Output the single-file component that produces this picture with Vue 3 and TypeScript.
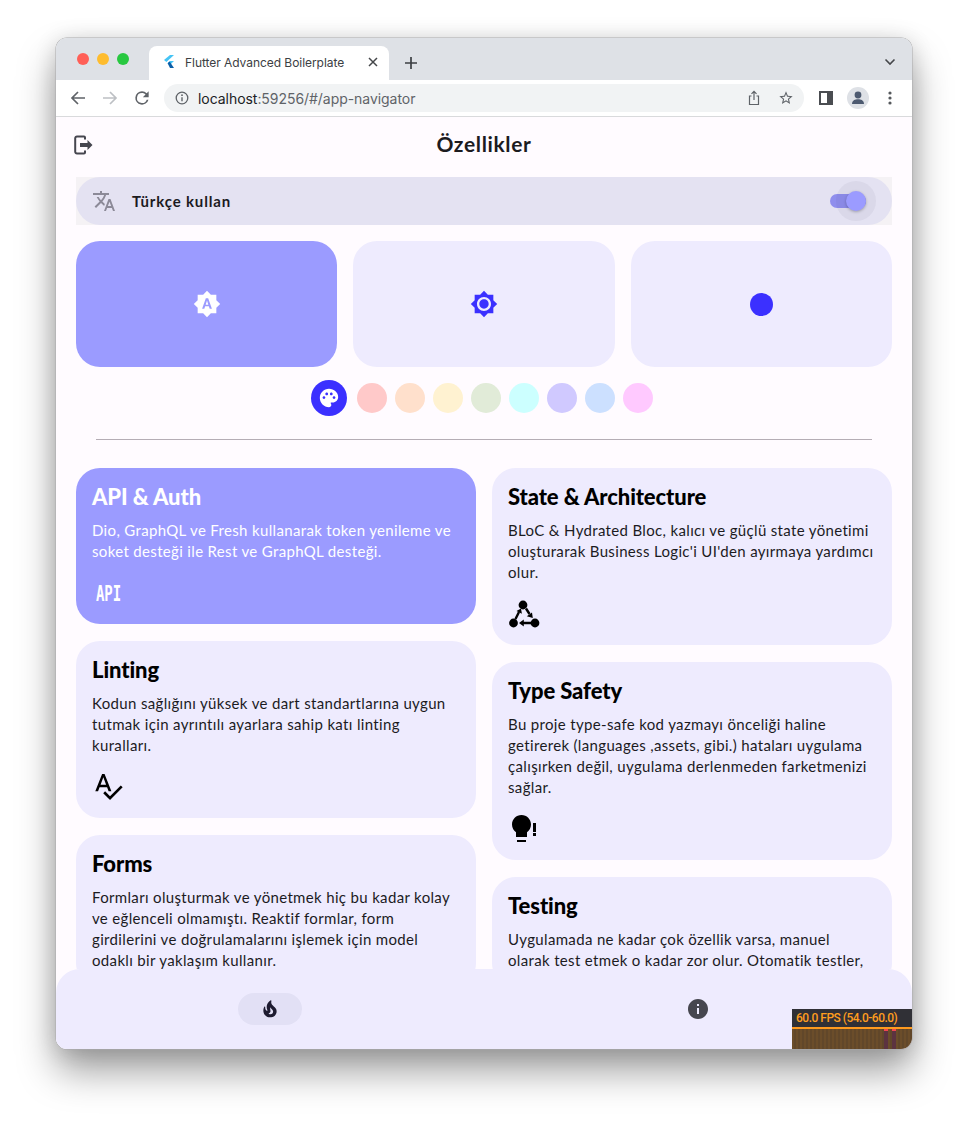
<script setup lang="ts">
interface Card { title: string; lines: string[]; icon?: string; active?: boolean }

const swatches: string[] = ['#ffc9c9', '#ffe0cc', '#fff2d1', '#e1ebd8', '#ccffff', '#d0c9ff', '#cce0ff', '#ffc9ff']

const leftCards: Card[] = [
  { title: 'API & Auth', active: true, icon: 'api', lines: ['Dio, GraphQL ve Fresh kullanarak token yenileme ve', 'soket desteği ile Rest ve GraphQL desteği.'] },
  { title: 'Linting', icon: 'lint', lines: ['Kodun sağlığını yüksek ve dart standartlarına uygun', 'tutmak için ayrıntılı ayarlara sahip katı linting', 'kuralları.'] },
  { title: 'Forms', lines: ['Formları oluşturmak ve yönetmek hiç bu kadar kolay', 've eğlenceli olmamıştı. Reaktif formlar, form', 'girdilerini ve doğrulamalarını işlemek için model', 'odaklı bir yaklaşım kullanır.'] },
]
const rightCards: Card[] = [
  { title: 'State & Architecture', icon: 'state', lines: ['BLoC & Hydrated Bloc, kalıcı ve güçlü state yönetimi', "oluşturarak Business Logic'i UI'den ayırmaya yardımcı", 'olur.'] },
  { title: 'Type Safety', icon: 'type', lines: ['Bu proje type-safe kod yazmayı önceliği haline', 'getirerek (languages ,assets, gibi.) hataları uygulama', 'çalışırken değil, uygulama derlenmeden farketmenizi', 'sağlar.'] },
  { title: 'Testing', lines: ['Uygulamada ne kadar çok özellik varsa, manuel', 'olarak test etmek o kadar zor olur. Otomatik testler,'] },
]
const columns: Card[][] = [leftCards, rightCards]
</script>

<template>
  <div class="stage">
    <div class="window">
      <div class="tabstrip">
        <div class="lights">
          <span class="light red"></span>
          <span class="light amber"></span>
          <span class="light green"></span>
        </div>
        <div class="tab">
          <svg class="favicon" width="12" height="14" viewBox="0 0 12 14">
            <polygon points="7,0 11,0 3.4,7 1,5" fill="#45c4f5" />
            <polygon points="7,6 11,6 6.6,10.2 4.6,8.2" fill="#45c4f5" />
            <polygon points="4.6,8.2 6.6,6.6 11,13 7,13" fill="#0a5fa8" />
          </svg>
          <span class="tab-title">Flutter Advanced Boilerplate</span>
          <svg class="tab-close" width="10" height="10" viewBox="0 0 10 10"><path d="M1 1l8 8M9 1l-8 8" stroke="#45474a" stroke-width="1.5" /></svg>
        </div>
        <svg class="newtab" width="14" height="14" viewBox="0 0 14 14"><path d="M7 1v12M1 7h12" stroke="#3c3f43" stroke-width="1.7" /></svg>
        <svg class="chev" width="12" height="8" viewBox="0 0 12 8"><path d="M1.5 1.5L6 6l4.5-4.5" fill="none" stroke="#45474a" stroke-width="1.6" /></svg>
      </div>

      <div class="toolbar">
        <svg class="tb-btn" width="16" height="16" viewBox="0 0 16 16"><path d="M15 8H2M8 2L2 8l6 6" fill="none" stroke="#5f6368" stroke-width="1.7" /></svg>
        <svg class="tb-btn" width="16" height="16" viewBox="0 0 16 16"><path d="M1 8h13M8 2l6 6-6 6" fill="none" stroke="#bdc0c4" stroke-width="1.7" /></svg>
        <svg class="tb-btn reload" width="20" height="20" viewBox="0 0 24 24"><path fill="#5f6368" d="M17.65 6.35A7.96 7.96 0 0 0 12 4a8 8 0 1 0 7.73 10h-2.08A6 6 0 1 1 12 6c1.66 0 3.14.69 4.22 1.78L13 11h7V4l-2.35 2.35z" /></svg>
        <div class="omnibox">
          <svg width="14" height="14" viewBox="0 0 14 14"><circle cx="7" cy="7" r="5.8" fill="none" stroke="#5f6368" stroke-width="1.3" /><path d="M7 6.2v4" stroke="#5f6368" stroke-width="1.4" /><circle cx="7" cy="4.2" r=".9" fill="#5f6368" /></svg>
          <span class="url"><b>localhost</b>:59256/#/app-navigator</span>
          <span class="omni-right">
            <svg width="14" height="16" viewBox="0 0 14 16"><path d="M4.5 6H2.500v8.500h9V6H9.500M7 10V1.500M4.500 3.800L7 1.300l2.500 2.500" fill="none" stroke="#5f6368" stroke-width="1.2" /></svg>
            <svg width="16" height="16" viewBox="0 0 24 24"><path fill="#5f6368" d="M22 9.24l-7.19-.62L12 2 9.19 8.63 2 9.24l5.46 4.73L5.82 21 12 17.27 18.18 21l-1.63-7.03L22 9.24zM12 15.4l-3.76 2.27 1-4.28-3.32-2.88 4.38-.38L12 6.1l1.71 4.04 4.38.38-3.32 2.88 1 4.28L12 15.4z" /></svg>
          </span>
        </div>
        <svg class="side" width="14" height="14" viewBox="0 0 14 14"><rect x="1" y="1" width="12" height="12" fill="#fff" stroke="#4a4d51" stroke-width="2" /><rect x="8" y="1" width="5" height="12" fill="#4a4d51" /></svg>
        <span class="avatar">
          <svg width="16" height="16" viewBox="0 0 16 16"><circle cx="8" cy="5" r="3.4" fill="#4d5a70" /><path d="M2 14c0-3.500 3-4.800 6-4.800s6 1.300 6 4.800z" fill="#4d5a70" /></svg>
        </span>
        <svg class="dots" width="4" height="14" viewBox="0 0 4 14"><circle cx="2" cy="2" r="1.6" fill="#55585c" /><circle cx="2" cy="7" r="1.6" fill="#55585c" /><circle cx="2" cy="12" r="1.6" fill="#55585c" /></svg>
      </div>

      <div class="app">
        <div class="scroll">
          <header class="appbar">
            <svg class="logout" width="20" height="20" viewBox="0 0 20 20">
              <path d="M11 4.500V2.500a1 1 0 0 0-1-1H3a1.800 1.800 0 0 0-1.800 1.800v13.400a1.800 1.800 0 0 0 1.800 1.800h7a1 1 0 0 0 1-1v-2" fill="none" stroke="#46464f" stroke-width="2" />
              <path d="M6 8h7.500V5l5 5-5 5v-3H6z" fill="#46464f" />
            </svg>
            <h1>Özellikler</h1>
          </header>

          <div class="lang-bg">
            <div class="lang">
              <svg width="24" height="24" viewBox="0 0 24 24"><path fill="#8c8a98" d="M12.87 15.07l-2.54-2.51.03-.03c1.74-1.94 2.98-4.17 3.71-6.53H17V4h-7V2H8v2H1v1.99h11.17C11.5 7.92 10.44 9.75 9 11.35 8.07 10.32 7.3 9.19 6.69 8h-2c.73 1.63 1.73 3.17 2.98 4.56l-5.09 5.02L4 19l5-5 3.11 3.11.76-2.04zM18.5 10h-2L12 22h2l1.12-3h4.75L21 22h2l-4.5-12zm-2.62 7l1.62-4.33L19.12 17h-3.24z" /></svg>
              <span class="lang-label">Türkçe kullan</span>
              <span class="switch"><span class="halo"></span><span class="thumb"></span></span>
            </div>
          </div>

          <div class="themes">
            <div class="theme selected">
              <svg width="28" height="28" viewBox="0 0 24 24"><path fill="#fff" d="M10.85 12.65h2.3L12 9l-1.15 3.65zM20 8.69V4h-4.69L12 .69 8.69 4H4v4.69L.69 12 4 15.31V20h4.69L12 23.31 15.31 20H20v-4.69L23.31 12 20 8.69zM14.3 16l-.7-2h-3.2l-.7 2H7.8L11 7h2l3.2 9h-1.9z" /></svg>
            </div>
            <div class="theme">
              <svg width="28" height="28" viewBox="0 0 24 24"><path fill="#3b30ff" d="M20 8.69V4h-4.69L12 .69 8.69 4H4v4.69L.69 12 4 15.31V20h4.69L12 23.31 15.31 20H20v-4.69L23.31 12 20 8.69zM12 18c-3.31 0-6-2.69-6-6s2.69-6 6-6 6 2.69 6 6-2.69 6-6 6zm0-10c-2.21 0-4 1.79-4 4s1.79 4 4 4 4-1.79 4-4-1.79-4-4-4z" /></svg>
            </div>
            <div class="theme"><span class="dot"></span></div>
          </div>

          <div class="colors">
            <span class="palette">
              <svg width="22" height="22" viewBox="0 0 24 24"><path fill="#fff" d="M12 2C6.49 2 2 6.49 2 12s4.49 10 10 10c1.38 0 2.5-1.12 2.5-2.5 0-.61-.23-1.2-.64-1.67-.08-.1-.13-.21-.13-.33 0-.28.22-.5.5-.5H16c3.31 0 6-2.69 6-6 0-4.96-4.49-9-10-9zm5.5 11c-.83 0-1.5-.67-1.5-1.5s.67-1.5 1.5-1.5 1.5.67 1.5 1.5-.67 1.5-1.5 1.5zm-3-4c-.83 0-1.5-.67-1.5-1.5S13.67 6 14.5 6s1.5.67 1.5 1.5S15.33 9 14.5 9zM5 11.5c0-.83.67-1.5 1.5-1.5s1.5.67 1.5 1.5S7.33 13 6.5 13 5 12.33 5 11.5zm6-4c0 .83-.67 1.5-1.5 1.5S8 8.33 8 7.5 8.67 6 9.5 6s1.5.67 1.5 1.5z" /></svg>
            </span>
            <span v-for="c in swatches" :key="c" class="swatch" :style="{ background: c }"></span>
          </div>

          <div class="divider"></div>

          <div class="grid">
            <div v-for="(col, i) in columns" :key="i" class="col">
              <section v-for="card in col" :key="card.title" class="card" :class="{ active: card.active }">
                <h2>{{ card.title }}</h2>
                <p><span v-for="l in card.lines" :key="l" class="line">{{ l }}</span></p>
                <div v-if="card.icon" class="card-icon">
                  <span v-if="card.icon === 'api'" class="api-mark">API</span>
                  <svg v-else-if="card.icon === 'lint'" width="32" height="32" viewBox="0 0 24 24"><path fill="#000" d="M12.45 16h2.09L9.43 3H7.57L2.46 16h2.09l1.12-3h5.64l1.14 3zm-6.02-5L8.5 5.48 10.57 11H6.43zm15.16.59l-8.09 8.09L9.83 16l-1.41 1.41 5.09 5.09L23 13l-1.41-1.41z" /></svg>
                  <svg v-else-if="card.icon === 'state'" width="32" height="32" viewBox="0 0 32 32">
                    <circle cx="15" cy="8" r="4.400" /><circle cx="5.500" cy="26" r="4.400" /><circle cx="27" cy="26" r="4.400" />
                    <path d="M7.500 22l3.500-7M18 11.500l3.500 5.500M23 26h-8" fill="none" stroke="#000" stroke-width="2.400" />
                    <path d="M13 11.500l.9 5.300-5.400-2.700zM24.800 21l-6-1.700 5.200-3.800zM11 26l4.800-3.500v7z" />
                  </svg>
                  <svg v-else width="32" height="32" viewBox="0 0 32 32">
                    <path d="M13.500 3C8.200 3 4 7.200 4 12.500c0 3.200 1.600 6 4 7.700V25h11v-4.800c2.400-1.700 4-4.500 4-7.700C23 7.200 18.800 3 13.500 3z" />
                    <rect x="9" y="28" width="9" height="2" />
                    <rect x="25" y="11" width="3" height="9" /><rect x="25" y="21" width="3" height="3" />
                  </svg>
                </div>
              </section>
            </div>
          </div>
        </div>

        <nav class="bottom">
          <div class="nav-slot">
            <span class="pill">
              <svg width="20" height="20" viewBox="0 0 24 24"><path fill="#1d1b30" d="M19.48 12.35c-1.57-4.08-7.16-4.3-5.81-10.23.1-.44-.37-.78-.75-.55C9.29 3.71 6.68 8 8.87 13.62c.18.46-.36.89-.75.59-1.81-1.37-2-3.34-1.84-4.75.06-.52-.62-.77-.91-.34C4.69 10.16 4 11.84 4 14.37c.38 5.6 5.11 7.32 6.81 7.54 2.43.31 5.06-.14 6.95-1.87 2.08-1.93 2.84-5.01 1.72-7.69zm-9.28 5.03c1.44-.35 2.18-1.39 2.38-2.31.33-1.43-.96-2.83-.09-5.09.33 1.87 3.27 3.04 3.27 5.08.08 2.53-2.66 4.7-5.56 2.32z" /></svg>
            </span>
          </div>
          <div class="nav-slot">
            <svg width="24" height="24" viewBox="0 0 24 24"><path fill="#46464f" d="M12 2C6.48 2 2 6.48 2 12s4.48 10 10 10 10-4.48 10-10S17.52 2 12 2zm1 15h-2v-6h2v6zm0-8h-2V7h2v2z" /></svg>
          </div>
        </nav>

        <div class="fps">
          <div class="fps-label">60.0 FPS (54.0-60.0)</div>
          <div class="fps-graph"><i class="bar b1"></i><i class="bar b2"></i></div>
        </div>
      </div>
    </div>
  </div>
</template>

<style>
html, body { background: #fff; margin: 0; }
</style>

<style scoped>
.stage { width: 968px; height: 1123px; padding: 38px 56px 74px; box-sizing: border-box; overflow: hidden; }
.window {
  width: 856px; height: 1011px; display: flex; flex-direction: column; position: relative;
  border-radius: 11px; overflow: hidden; box-shadow: 0 0 0 .5px #a9a9ab, 0 22px 38px rgba(0,0,0,.38), 0 2px 22px rgba(0,0,0,.14);
  font-family: Inter, "Liberation Sans", sans-serif;
}
.tabstrip { height: 42px; background: #dee1e6; position: relative; display: flex; flex: none; }
.lights { position: absolute; left: 21px; top: 15px; display: flex; gap: 8px; }
.light { width: 12px; height: 12px; border-radius: 50%; }
.red { background: #ff5f57; } .amber { background: #febc2e; } .green { background: #28c840; }
.tab { position: absolute; left: 93px; top: 8px; width: 240px; height: 34px; background: #fff; border-radius: 8px 8px 0 0; display: flex; align-items: center; box-sizing: border-box; padding: 0 0 2px 14px; }
.tab-title { margin-left: 10px; font-size: 12px; color: #3c4043; width: 168px; white-space: nowrap; letter-spacing: -.05px; }
.tab-close { margin-left: 15px; }
.newtab { position: absolute; left: 348px; top: 18px; }
.chev { position: absolute; right: 16px; top: 20px; }

.toolbar { height: 36px; background: #fff; border-bottom: 1px solid #d9dadc; display: flex; align-items: center; flex: none; box-sizing: content-box; }
.tb-btn { margin-left: 16px; }
.tb-btn:first-child { margin-left: 14px; }
.tb-btn.reload { margin-left: 14px; }
.omnibox { margin-left: 12px; width: 640px; height: 28px; border-radius: 14px; background: #f1f3f4; display: flex; align-items: center; padding: 0 11px; box-sizing: border-box; }
.url { margin-left: 9px; font-size: 14px; color: #5f6368; white-space: nowrap; letter-spacing: -.05px; }
.url b { font-weight: 400; color: #202124; }
.omni-right { margin-left: auto; display: flex; gap: 17px; align-items: center; margin-right: -1px; }
.side { margin-left: 15px; }
.avatar { margin-left: 14px; width: 22px; height: 22px; border-radius: 50%; background: #dee1e6; display: flex; align-items: center; justify-content: center; }
.dots { margin-left: 19px; }

.app { flex: 1; min-height: 0; display: flex; flex-direction: column; background: #fffbff; position: relative; font-family: Lato, "Open Sans", sans-serif; color: #1c1b1f; }
.scroll { flex: 1; min-height: 0; overflow: hidden; padding: 0 20px; }
.appbar { height: 60px; box-sizing: border-box; padding-bottom: 8px; display: flex; align-items: center; justify-content: center; position: relative; }
.appbar h1 { margin: 0; font-size: 21px; font-weight: 700; color: #1c1b1f; letter-spacing: .65px; }
.logout { position: absolute; left: -2px; top: 18px; }

.lang-bg { background: #f5f2f5; height: 48px; }
.lang { height: 48px; border-radius: 24px; background: #e4e2f2; display: flex; align-items: center; padding: 0 16px; position: relative; }
.lang-label { margin-left: 16px; font-size: 15px; font-weight: 700; letter-spacing: .85px; color: #1c1b1f; }
.switch { margin-left: auto; width: 36px; height: 14px; border-radius: 7px; background: #8f8eed; position: relative; margin-right: 10px; }
.halo { position: absolute; width: 40px; height: 40px; border-radius: 50%; right: -10px; top: -13px; background: rgba(70,70,110,.06); }
.thumb { position: absolute; width: 20px; height: 20px; border-radius: 50%; right: 0; top: -3px; background: #9b9bff; box-shadow: 0 1px 3px rgba(0,0,0,.28); }

.themes { display: grid; grid-template-columns: repeat(3, 1fr); gap: 16px; margin-top: 16px; }
.theme { height: 126px; border-radius: 24px; background: #eeebfe; display: flex; align-items: center; justify-content: center; }
.theme.selected { background: #9b9bff; }
.dot { width: 23px; height: 23px; border-radius: 50%; background: #3b30ff; }

.colors { margin-top: 13px; padding-right: 4px; display: flex; justify-content: center; align-items: center; gap: 8px; }
.palette { width: 36px; height: 36px; border-radius: 50%; background: #3b30ff; display: flex; align-items: center; justify-content: center; margin-right: 2px; }
.swatch { width: 30px; height: 30px; border-radius: 50%; }

.divider { height: 1px; background: #b5adb5; margin: 23px 20px 28px; }

.grid { display: flex; gap: 16px; align-items: flex-start; }
.col { flex: 1; min-width: 0; display: flex; flex-direction: column; gap: 17px; }
.card { background: #eeebfe; border-radius: 24px; padding: 16px; }
.card.active { background: #9b9bff; color: #fff; }
.card h2 { margin: -2px 0 8px; font-size: 22px; line-height: 30px; font-weight: 900; color: #000; letter-spacing: -.1px; }
.card.active h2 { color: #fff; }
.card p { margin: 0; font-size: 15px; line-height: 21px; letter-spacing: .34px; }
.line { display: block; white-space: nowrap; }
.card-icon { margin-top: 14px; height: 32px; display: flex; align-items: center; }
.api-mark { display: inline-block; margin: 3px 0 0 4px; font-family: "DejaVu Sans Mono", monospace; font-weight: 700; font-size: 14px; line-height: 14px; color: #fff; transform: scaleY(1.45); letter-spacing: -.1px; }

.bottom { height: 80px; flex: none; background: #eeebfe; border-radius: 24px 24px 0 0; display: flex; }
.nav-slot { flex: 1; display: flex; align-items: center; justify-content: center; }
.pill { width: 64px; height: 32px; border-radius: 16px; background: #e2e0f5; display: flex; align-items: center; justify-content: center; }

.fps { position: absolute; right: 0; bottom: 0; width: 120px; height: 40px; font-family: Roboto, sans-serif; }
.fps-label { height: 18px; background: #303036; color: #ff9d1e; font-size: 12px; line-height: 18px; padding-left: 4px; font-weight: 500; letter-spacing: -.5px; white-space: nowrap; }
.fps-graph { height: 22px; box-sizing: border-box; border-top: 2px solid #ff9a1f; background: repeating-linear-gradient(90deg, #6b4d2a 0 2px, #61472a 2px 4px); position: relative; }
.bar { position: absolute; top: 0; bottom: 0; width: 4px; background: #5c3340; border-top: 2px solid #f0464f; }
.b1 { left: 92px; } .b2 { left: 100px; }
</style>
